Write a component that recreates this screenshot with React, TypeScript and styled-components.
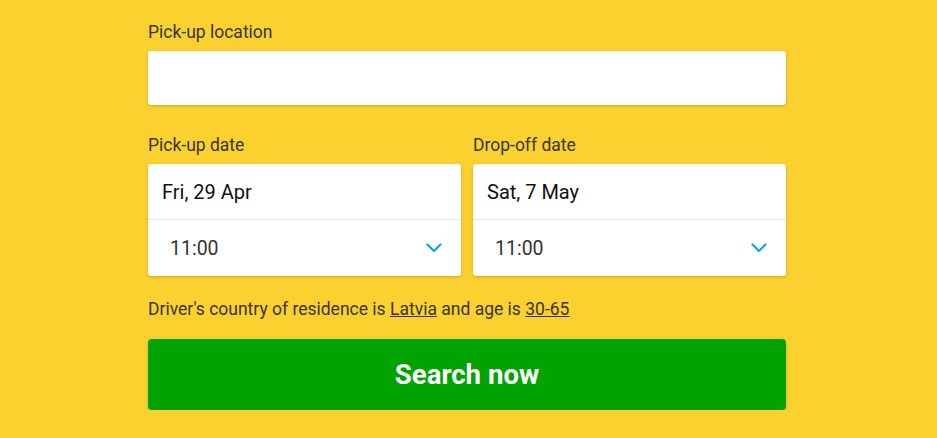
import React from 'react'
import styled, { createGlobalStyle } from 'styled-components'

const GlobalStyle = createGlobalStyle`
  html, body {
    margin: 0;
    padding: 0;
    background: #fbd12f;
  }
  body {
    font-family: Roboto, "Liberation Sans", Arial, sans-serif;
    color: #333333;
  }
`

const Page = styled.div`
  padding-right: 3px;
`

const Form = styled.div`
  width: 638px;
  margin: 0 auto;
  padding-top: 22px;
  display: flex;
  flex-direction: column;
`

const Field = styled.div`
  display: flex;
  flex-direction: column;
  min-width: 0;
`

const Label = styled.label`
  font-size: 17.5px;
  line-height: 20px;
  color: #38362f;
  margin-bottom: 9px;
`

const Card = styled.div`
  background: #ffffff;
  border-radius: 3px;
  box-shadow: 0 1px 3px rgba(120, 90, 0, 0.35);
`

const LocationInput = styled(Card)`
  height: 54px;
`

const DateRow = styled.div`
  display: grid;
  grid-template-columns: 1fr 1fr;
  gap: 12px;
  margin-top: 30px;
`

const DateLine = styled.div`
  height: 55px;
  display: flex;
  align-items: center;
  padding: 0 14px;
  font-size: 20px;
  color: #111111;
  border-bottom: 1px solid #e6e6e6;
`

const TimeLine = styled.div`
  height: 56px;
  display: flex;
  align-items: center;
  justify-content: space-between;
  padding: 0 19px 0 22px;
  font-size: 19.5px;
  color: #333333;
`

const Chevron = () => (
  <svg width="16" height="10" viewBox="0 0 16 10" fill="none">
    <path d="M1.5 1.5 L8 8 L14.5 1.5" stroke="#12a2ee" strokeWidth="2.2" strokeLinecap="round" strokeLinejoin="round" />
  </svg>
)

const Residence = styled.p`
  margin: 23px 0 0;
  font-size: 17.5px;
  line-height: 20px;
  color: #38362f;

  & a {
    color: #38362f;
    text-decoration: underline;
  }
`

const SearchButton = styled.button`
  margin-top: 20px;
  height: 71px;
  border: none;
  border-radius: 4px;
  background: #00a300;
  color: #ffffff;
  font-family: Roboto, "Liberation Sans", Arial, sans-serif;
  font-weight: 700;
  font-size: 27.6px;
  box-shadow: 0 1px 3px rgba(120, 90, 0, 0.35);
  cursor: pointer;
`

interface DateFieldProps {
  label: string
  date: string
  time: string
}

const DateField: React.FC<DateFieldProps> = ({ label, date, time }) => (
  <Field>
    <Label>{label}</Label>
    <Card>
      <DateLine>{date}</DateLine>
      <TimeLine>
        <span>{time}</span>
        <Chevron />
      </TimeLine>
    </Card>
  </Field>
)

const App: React.FC = () => (
  <Page>
    <GlobalStyle />
    <Form>
      <Field>
        <Label>Pick-up location</Label>
        <LocationInput />
      </Field>
      <DateRow>
        <DateField label="Pick-up date" date="Fri, 29 Apr" time="11:00" />
        <DateField label="Drop-off date" date="Sat, 7 May" time="11:00" />
      </DateRow>
      <Residence>
        Driver's country of residence is <a>Latvia</a> and age is <a>30-65</a>
      </Residence>
      <SearchButton>Search now</SearchButton>
    </Form>
  </Page>
)

export default App
